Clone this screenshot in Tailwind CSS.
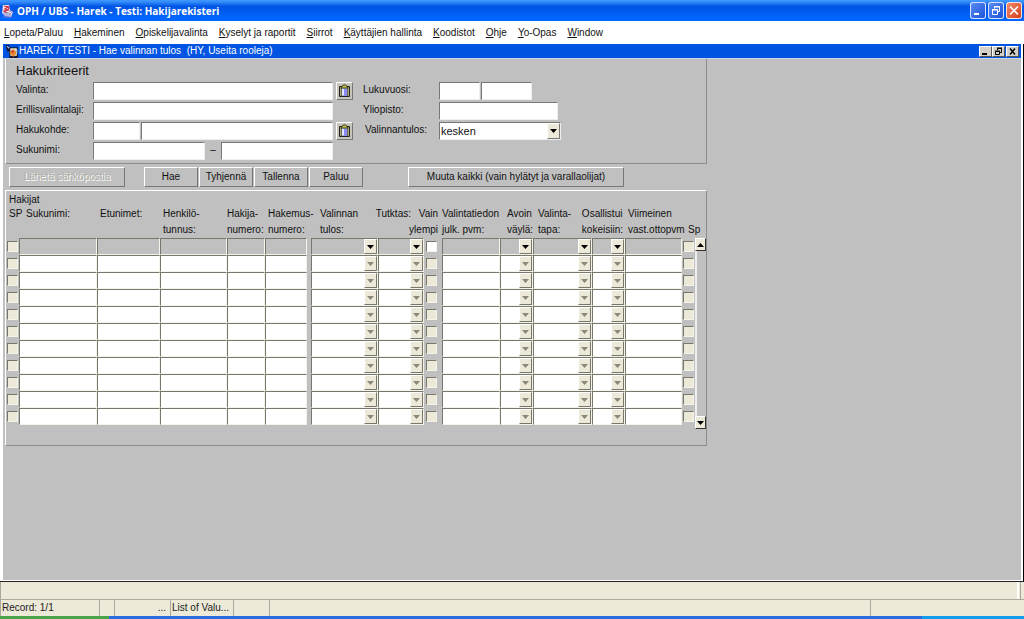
<!DOCTYPE html>

<html lang="fi">
    <head>
        <meta charset="utf-8">
        <meta name="viewport" content="width=device-width, initial-scale=1">
        <script src="https://cdn.jsdelivr.net/npm/@tailwindcss/browser@4"></script>
        <title>OPH / UBS - Harek - Testi: Hakijarekisteri</title>
    </head>
    <body class="flex min-h-screen flex-col bg-white font-['Liberation_Sans',sans-serif] text-[10px] leading-4 text-[#111]">
        <!-- window title -->
        <header class="flex h-[21px] items-center justify-between bg-linear-to-b from-[#3d95ff] from-5% via-[#0054e3] via-30% to-[#0066ff] to-85% pr-[2px]">
            <div class="flex items-center">
                <svg class="h-4 w-4 shrink-0" viewBox="0 0 16 16" aria-hidden="true">
                    <path d="M3 2h6l1 5 3 2-2 5-6-1-3-3z" fill="#f4e4ee"/>
                    <path d="M4 3l4 1-3 2 4 1-5 1 3 2M8 3l1 3" fill="none" stroke="#d22a3c" stroke-width="1.2"/>
                    <path d="M3 10h6M4 12h7M9 8c4 0 3 3 0 3M3 14h9" fill="none" stroke="#7d7fc4"/>
                </svg>
                <h1 class="pl-px font-['Open_Sans',sans-serif] font-bold text-white">OPH / UBS - Harek - Testi: Hakijarekisteri</h1>
            </div>
            <div class="flex gap-[2px]">
                <button aria-label="Pienennä" class="h-[17px] w-4 rounded-[3px] border border-white/80 bg-linear-to-br from-[#5a8cf5] to-[#1c50d8]">
                    <svg viewBox="0 0 14 15" aria-hidden="true"><path d="M3 11h5" stroke="#fff" stroke-width="2"/></svg>
                </button>
                <button aria-label="Palauta" class="h-[17px] w-4 rounded-[3px] border border-white/80 bg-linear-to-br from-[#5a8cf5] to-[#1c50d8]">
                    <svg viewBox="0 0 14 15" aria-hidden="true"><path d="M5.5 5.500v-2h5v5h-2M3.500 6.500h5v5h-5zM3 7h6M5 4h6" fill="none" stroke="#fff"/></svg>
                </button>
                <button aria-label="Sulje" class="h-[17px] w-4 rounded-[3px] border border-white/80 bg-linear-to-br from-[#f08a6c] to-[#d23a10]">
                    <svg viewBox="0 0 14 15" aria-hidden="true"><path d="M3 3.500l8 8M11 3.500l-8 8" stroke="#fff" stroke-width="1.600"/></svg>
                </button>
            </div>
        </header>

        <nav class="flex h-[23px] items-center gap-[11px] px-1">
            <a href="#"><u>L</u>opeta/Paluu</a>
            <a href="#"><u>H</u>akeminen</a>
            <a href="#"><u>O</u>piskelijavalinta</a>
            <a href="#"><u>K</u>yselyt ja raportit</a>
            <a href="#"><u>S</u>iirrot</a>
            <a href="#"><u>K</u>äyttäjien hallinta</a>
            <a href="#"><u>K</u>oodistot</a>
            <a href="#"><u>O</u>hje</a>
            <a href="#"><u>Y</u>o-Opas</a>
            <a href="#"><u>W</u>indow</a>
        </nav>

        <main class="flex flex-1 flex-col border-r border-b border-r-black border-b-[#222] pr-[2px] pb-px pl-[3px]">
            <!-- inner window title -->
            <div class="flex h-[14px] items-center justify-between bg-[#0054e3] pr-[2px] pl-[3px] text-white">
                <div class="flex items-center">
                    <svg class="h-[13px] w-[13px] shrink-0" viewBox="0 0 12 12" aria-hidden="true">
                        <path d="M0 0h3v2h8v10H3V6H1z" fill="#181830"/>
                        <path d="M4 3h6v7H4z" fill="#e8e0c0"/>
                        <path d="M3 7l4-3 3 3-3 4z" fill="#e8862a"/>
                        <path d="M1 1l2 2M10 4v4" stroke="#9fc4ff"/>
                        <path d="M5 5h2v2H5z" fill="#c8283c"/>
                    </svg>
                    <h2 class="whitespace-pre">HAREK / TESTI - Hae valinnan tulos  (HY, Useita rooleja)</h2>
                </div>
                <div class="flex">
                    <button aria-label="Pienennä ikkuna" class="h-[11px] w-[13px] border border-t-white border-r-[#555] border-b-[#555] border-l-white bg-[#d4d0c8]">
                        <svg viewBox="0 0 11 9" aria-hidden="true"><path d="M2 7h5" stroke="#000" stroke-width="2"/></svg>
                    </button>
                    <button aria-label="Palauta ikkuna" class="h-[11px] w-[13px] border border-t-white border-r-[#555] border-b-[#555] border-l-white bg-[#d4d0c8]">
                        <svg viewBox="0 0 11 9" aria-hidden="true"><path d="M4.500 3V1.500h4v4H7M2.500 4.500h4v3h-4zM2 4h5M4 1h5" fill="none" stroke="#000"/></svg>
                    </button>
                    <button aria-label="Sulje ikkuna" class="ml-px h-[11px] w-[13px] border border-t-white border-r-[#555] border-b-[#555] border-l-white bg-[#d4d0c8]">
                        <svg viewBox="0 0 11 9" aria-hidden="true"><path d="M3 1.500l5 6M8 1.500l-5 6" stroke="#000" stroke-width="1.500"/></svg>
                    </button>
                </div>
            </div>

            <div class="flex-1 border-t border-t-[#c9d3ec] bg-[#c0c0c0] pl-[2px]">
                <div class="w-fit">
                    <!-- search criteria -->
                    <section class="border-r border-b border-l border-r-[#8c8c8c] border-b-[#8c8c8c] border-l-white pt-1 pb-[3px] pl-[10px]">
                        <h3 class="h-[19px] text-[13px] leading-4">Hakukriteerit</h3>
                        <form class="grid auto-rows-[18px] grid-cols-[77px_240px_30px_76px_auto] gap-y-[2px]">
                            <label for="valinta">Valinta:</label>
                            <input id="valinta" class="border border-t-[#777] border-r-[#eee] border-b-[#eee] border-l-[#777] bg-white px-px">
                            <div class="pl-[3px]">
                                <button type="button" aria-label="Valintaluettelo" class="h-[18px] w-[17px] border border-t-white border-r-[#777] border-b-[#777] border-l-white bg-[#c8c6bc]">
                                    <svg viewBox="0 0 15 16" aria-hidden="true">
                                        <path d="M2.500 3.500h10v10h-10z" fill="#a8a870" stroke="#222"/>
                                        <path d="M4.500 5h6v8h-6z" fill="#e4e4ff" stroke="#333" stroke-width=".6"/><path d="M7 6h3v7H7z" fill="#8c8cf4"/>
                                        <path d="M4 5l2-3h3l2 3z" fill="#c8c840" stroke="#222" stroke-width=".8"/>
                                    </svg>
                                </button>
                            </div>
                            <label for="lukuvuosi">Lukuvuosi:</label>
                            <div class="flex gap-px">
                                <input id="lukuvuosi" class="w-[41px] border border-t-[#777] border-r-[#eee] border-b-[#eee] border-l-[#777] bg-white px-px">
                                <input aria-label="Lukukausi" class="w-[51px] border border-t-[#777] border-r-[#eee] border-b-[#eee] border-l-[#777] bg-white px-px">
                            </div>

                            <label for="laji">Erillisvalintalaji:</label>
                            <input id="laji" class="border border-t-[#777] border-r-[#eee] border-b-[#eee] border-l-[#777] bg-white px-px">
                            <span></span>
                            <label for="yliopisto">Yliopisto:</label>
                            <input id="yliopisto" class="w-[119px] border border-t-[#777] border-r-[#eee] border-b-[#eee] border-l-[#777] bg-white px-px">

                            <label for="hakukohde">Hakukohde:</label>
                            <div class="flex gap-px">
                                <input id="hakukohde" class="w-[47px] border border-t-[#777] border-r-[#eee] border-b-[#eee] border-l-[#777] bg-white px-px">
                                <input aria-label="Hakukohteen nimi" class="min-w-0 flex-1 border border-t-[#777] border-r-[#eee] border-b-[#eee] border-l-[#777] bg-white px-px">
                            </div>
                            <div class="pl-[3px]">
                                <button type="button" aria-label="Hakukohdeluettelo" class="h-[18px] w-[17px] border border-t-white border-r-[#777] border-b-[#777] border-l-white bg-[#c8c6bc]">
                                    <svg viewBox="0 0 15 16" aria-hidden="true">
                                        <path d="M2.500 3.500h10v10h-10z" fill="#a8a870" stroke="#222"/>
                                        <path d="M4.500 5h6v8h-6z" fill="#e4e4ff" stroke="#333" stroke-width=".6"/><path d="M7 6h3v7H7z" fill="#8c8cf4"/>
                                        <path d="M4 5l2-3h3l2 3z" fill="#c8c840" stroke="#222" stroke-width=".8"/>
                                    </svg>
                                </button>
                            </div>
                            <label for="tulos" class="pl-[2px]">Valinnantulos:</label>
                            <div class="flex w-[122px] border border-t-[#777] border-r-[#eee] border-b-[#eee] border-l-[#777] bg-white">
                                <select id="tulos" class="min-w-0 flex-1 appearance-none pl-px text-[11px]">
                                    <option>kesken</option>
                                </select>
                                <span class="flex w-[13px] items-center justify-center border border-t-white border-r-[#777] border-b-[#777] border-l-white bg-[#ece9d8]">
                                    <svg class="h-1 w-[7px]" viewBox="0 0 7 4" aria-hidden="true"><path d="M0 0h7L3.500 4z" fill="#000"/></svg>
                                </span>
                            </div>

                            <label for="sukunimi">Sukunimi:</label>
                            <div class="flex">
                                <input id="sukunimi" class="min-w-0 flex-1 border border-t-[#777] border-r-[#eee] border-b-[#eee] border-l-[#777] bg-white px-px">
                                <span class="w-4 text-center">–</span>
                                <input aria-label="Sukunimi, loppu" class="min-w-0 flex-1 border border-t-[#777] border-r-[#eee] border-b-[#eee] border-l-[#777] bg-white px-px">
                            </div>
                        </form>
                    </section>

                    <div class="flex gap-px py-[3px] pl-1 whitespace-nowrap">
                        <button disabled class="mr-[18px] h-5 w-[116px] border border-t-white border-r-[#777] border-b-[#777] border-l-white text-[#b0b0a8] text-shadow-[1px_1px_0_#fff]">Lähetä sähköpostia</button>
                        <button class="h-5 w-[54px] border border-t-white border-r-[#777] border-b-[#777] border-l-white">Hae</button>
                        <button class="h-5 w-[54px] border border-t-white border-r-[#777] border-b-[#777] border-l-white">Tyhjennä</button>
                        <button class="h-5 w-[54px] border border-t-white border-r-[#777] border-b-[#777] border-l-white">Tallenna</button>
                        <button class="h-5 w-[54px] border border-t-white border-r-[#777] border-b-[#777] border-l-white">Paluu</button>
                        <button class="ml-11 h-5 w-[216px] border border-t-white border-r-[#777] border-b-[#777] border-l-white">Muuta kaikki (vain hylätyt ja varallaolijat)</button>
                    </div>

                    <!-- applicants -->
                    <section class="border border-t-white border-r-[#8c8c8c] border-b-[#8c8c8c] border-l-white pt-[3px] pb-4">
                        <h3 class="pl-[3px] leading-3">Hakijat</h3>
                        <div class="flex">
                            <table class="mb-1 w-[689px] table-fixed border-collapse">
                                <colgroup>
                                    <col class="w-[13px]"><col class="w-[78px]"><col class="w-[63px]"><col class="w-[67px]"><col class="w-[38px]">
                                    <col class="w-[46px]"><col class="w-[67px]"><col class="w-[46px]"><col class="w-[18px]"><col class="w-[58px]">
                                    <col class="w-[33px]"><col class="w-[59px]"><col class="w-[33px]"><col class="w-[57px]"><col class="w-[13px]">
                                </colgroup>
                                <thead>
                                    <tr class="h-8 text-left align-top whitespace-nowrap *:p-0 *:font-normal">
                                        <th id="h-sp"><div class="pl-[3px]">SP</div></th>
                                        <th id="h-suku"><div class="pl-[7px]">Sukunimi:</div></th>
                                        <th id="h-etu"><div class="pl-[3px]">Etunimet:</div></th>
                                        <th id="h-hetu"><div class="pl-[3px]">Henkilö-<br>tunnus:</div></th>
                                        <th id="h-hakija">Hakija-<br>numero:</th>
                                        <th id="h-hakemus"><div class="pl-[3px]">Hakemus-<br>numero:</div></th>
                                        <th id="h-tulos"><div class="pl-[9px]">Valinnan<br>tulos:</div></th>
                                        <th id="h-tutk"><div class="flex justify-end pr-[13px]">Tutktas:</div></th>
                                        <th id="h-vain"><div class="flex justify-end pr-1 text-right">Vain<br>ylempi</div></th>
                                        <th id="h-julk">Valintatiedon<br>julk. pvm:</th>
                                        <th id="h-avoin"><div class="pl-[7px]">Avoin<br>väylä:</div></th>
                                        <th id="h-tapa"><div class="pl-[5px]">Valinta-<br>tapa:</div></th>
                                        <th id="h-osal"><div class="flex justify-end pr-[2px]">Osallistui<br>kokeisiin:</div></th>
                                        <th id="h-viim"><div class="pl-[3px]">Viimeinen<br>vast.ottopvm</div></th>
                                        <th id="h-sp2"><div class="pt-4 pl-[6px]">Sp</div></th>
                                    </tr>
                                </thead>
                                <tbody id="rows"></tbody>
                            </table>
                            <div class="mt-8 flex w-[11px] flex-col border-l-2 border-l-[#eee]">
                                <button aria-label="Vieritä ylös" class="-ml-[2px] flex h-[13px] items-center justify-center border border-t-white border-r-[#333] border-b-[#333] border-l-white bg-[#ece9d8]">
                                    <svg class="h-1 w-[7px]" viewBox="0 0 7 4" aria-hidden="true"><path d="M0 4h7L3.500 0z" fill="#000"/></svg>
                                </button>
                                <div class="flex-1"></div>
                                <button aria-label="Vieritä alas" class="-ml-[2px] flex h-[13px] items-center justify-center border border-t-white border-r-[#333] border-b-[#333] border-l-white bg-[#ece9d8]">
                                    <svg class="h-1 w-[7px]" viewBox="0 0 7 4" aria-hidden="true"><path d="M0 0h7L3.500 4z" fill="#000"/></svg>
                                </button>
                            </div>
                        </div>
                    </section>
                </div>
            </div>
        </main>

        <footer class="whitespace-nowrap text-[#222]">
            <div class="flex h-[17px] justify-end border-l border-l-[#aca899] bg-[#ece9d8] pr-[3px]">
                <div class="w-1 border-r border-l-2 border-r-[#aca899] border-l-white"></div>
            </div>
            <div class="flex h-[17px] border-t border-l border-t-[#aca899] border-l-[#aca899] bg-[#ece9d8]">
                <div class="w-[99px] border-r border-r-[#aca899] pl-px">Record: 1/1</div>
                <div class="w-[15px] border-r border-r-[#aca899]"></div>
                <div class="w-[56px] border-r border-r-[#aca899] pr-1 text-right">...</div>
                <div class="w-[63px] border-r border-r-[#aca899] pl-px">List of Valu...</div>
                <div class="w-9 border-r border-r-[#aca899]"></div>
                <div class="flex-1 border-r border-r-[#aca899]"></div>
                <div class="w-[15%]"></div>
            </div>
            <div class="flex h-[3px]">
                <div class="w-[109px] bg-[#4aa54a]"></div>
                <div class="flex-1 bg-[#2a6be0]"></div>
                <div class="w-[10%] bg-[#129cec]"></div>
            </div>
        </footer>

        <script>
            const columns = [
                ['h-sp', 'check'], ['h-suku', 'text'], ['h-etu', 'text'], ['h-hetu', 'text'], ['h-hakija', 'text'],
                ['h-hakemus', 'last'], ['h-tulos', 'combo'], ['h-tutk', 'combo'], ['h-vain', 'check'], ['h-julk', 'text'],
                ['h-avoin', 'combo'], ['h-tapa', 'combo'], ['h-osal', 'combo'], ['h-viim', 'text'], ['h-sp2', 'check'],
            ]

            function cell(id, kind, first) {
                const bg = first ? 'bg-[#c0c0c0]' : 'bg-white'
                const off = first ? '' : 'disabled'
                const edge = 'border border-t-[#77776c] border-l-[#77776c] border-r-[#f4f4ea] border-b-[#f4f4ea]'

                if (kind === 'check') {
                    const fill = first && id === 'h-vain' ? 'bg-white' : 'bg-[#ece9d8]'
                    const pad = id === 'h-vain' ? 'pl-[2px]' : 'pl-px'
                    return `<td class="p-0"><div class="${pad}"><input type="checkbox" aria-labelledby="${id}" class="block h-[11px] w-[11px] appearance-none ${edge} ${fill}"></div></td>`
                }
                if (kind === 'combo') {
                    const arrow = first ? '#000' : '#8a8878'
                    return `<td class="p-0"><div class="flex h-[17px] ${edge} ${bg}">
                        <select aria-labelledby="${id}" ${off} class="min-w-0 flex-1 appearance-none"><option></option></select>
                        <span class="flex w-[13px] items-center justify-center border border-t-white border-l-white border-r-[#77776c] border-b-[#77776c] bg-[#ece9d8]">
                            <svg class="h-1 w-[7px]" viewBox="0 0 7 4" aria-hidden="true"><path d="M0 0h7L3.500 4z" fill="${arrow}"/></svg>
                        </span></div></td>`
                }
                const pad = kind === 'last' ? 'pr-1' : ''
                return `<td class="p-0"><div class="${pad}"><input aria-labelledby="${id}" class="block h-[17px] w-full ${edge} ${bg}"></div></td>`
            }

            let html = ''
            for (let i = 0; i < 11; i++) {
                html += '<tr class="h-[17px]">' + columns.map(([id, kind]) => cell(id, kind, i === 0)).join('') + '</tr>'
            }
            document.getElementById('rows').innerHTML = html
        </script>
    </body>
</html>
